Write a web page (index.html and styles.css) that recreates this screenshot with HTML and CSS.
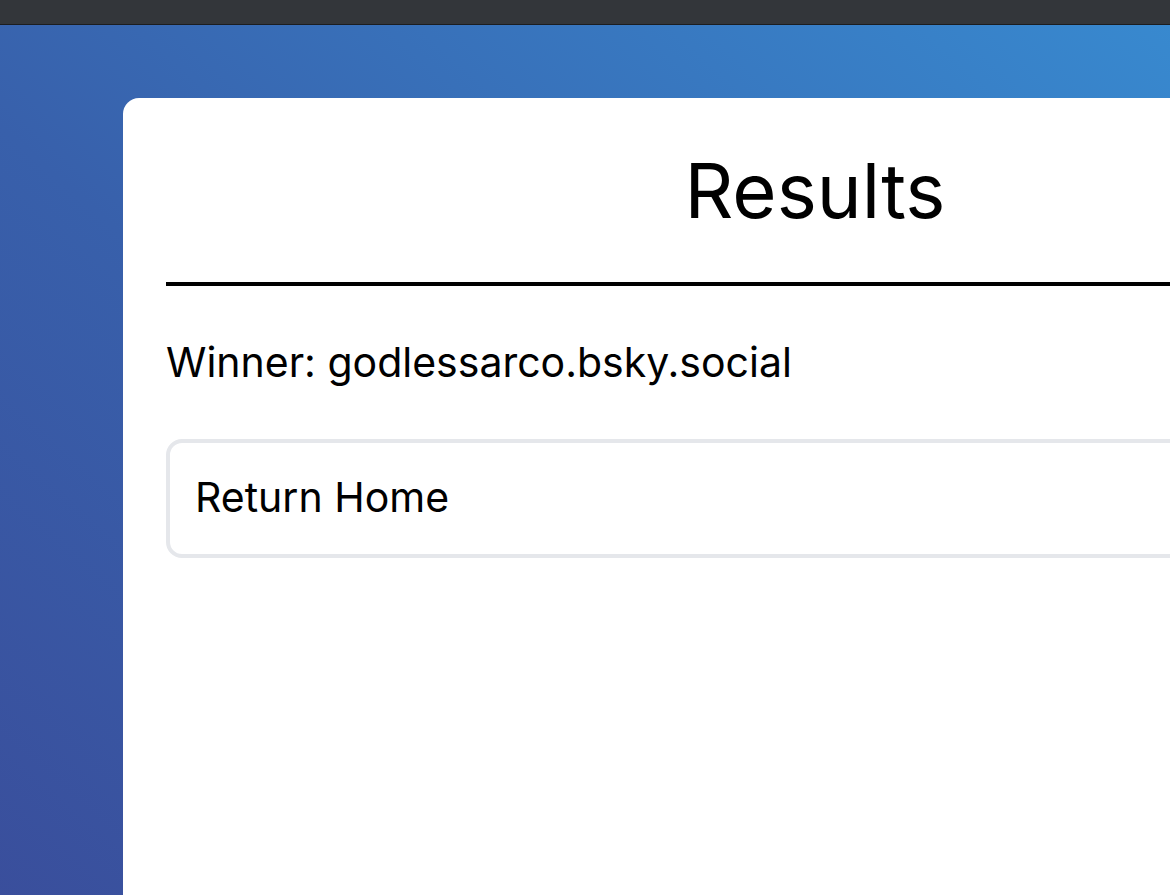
FILE: index.html
```html
<!DOCTYPE html>
<html lang="en">
<head>
    <meta charset="UTF-8">
    <meta name="viewport" content="width=device-width, initial-scale=1.0">
    <title>Results</title>
    <link rel="stylesheet" href="styles.css">
</head>
<body>
    <div class="topbar"></div>

    <main class="page">
        <div class="card">
            <h1>Results</h1>
            <hr class="divider">
            <p class="winner">Winner: godlessarco.bsky.social</p>
            <button class="home-btn">Return Home</button>
        </div>
    </main>
</body>
</html>
```

FILE: styles.css
```css
html, body {
    margin: 0;
    padding: 0;
    height: 100%;
    overflow: hidden;
}

body {
    font-family: Inter, Roboto, "Liberation Sans", sans-serif;
    color: #000;
    display: flex;
    flex-direction: column;
}

.topbar {
    height: 24px;
    background-color: #33363a;
    border-bottom: 1px solid #1c1d1f;
    flex-shrink: 0;
}

.page {
    flex: 1;
    padding: 73px 0 0 123px;
    background: linear-gradient(to top right, #3a4b99 0%, #3860ab 45%, #3889cf 100%);
}

.card {
    width: 1298px;
    min-height: 900px;
    background-color: white;
    border-radius: 16px;
    padding: 47px 43px 0;
}

.card h1 {
    margin: 0;
    font-size: 76px;
    font-weight: 400;
    line-height: 1.2;
    text-align: center;
}

.divider {
    margin: 46px 0 0;
    border: none;
    height: 4px;
    background-color: #000;
}

.winner {
    margin: 52px 0 0;
    font-size: 41px;
    line-height: 1.2;
}

.home-btn {
    display: block;
    width: 100%;
    margin-top: 52px;
    padding: 30px 25px 31px;
    font-family: inherit;
    font-size: 41px;
    line-height: 1.2;
    text-align: left;
    color: #000;
    background-color: white;
    border: 4px solid #e5e7eb;
    border-radius: 16px;
    cursor: pointer;
}
```
